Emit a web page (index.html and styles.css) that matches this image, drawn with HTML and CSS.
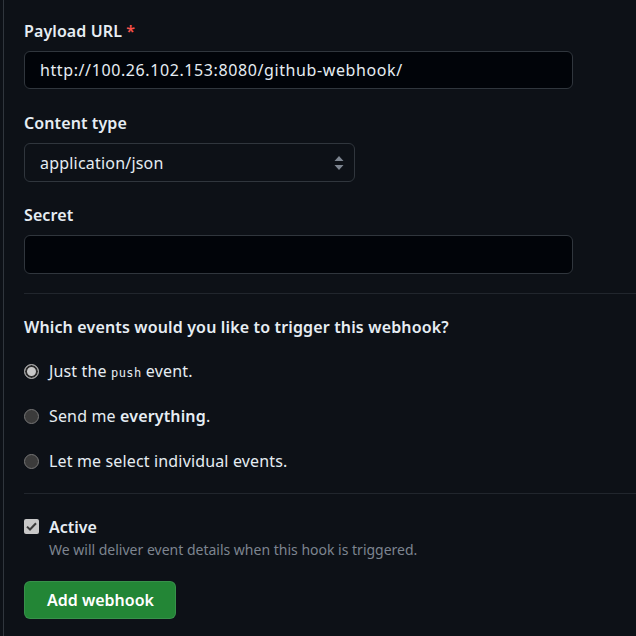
FILE: index.html
```html
<!DOCTYPE html>
<html lang="en">
<head>
<meta charset="utf-8">
<link rel="stylesheet" href="styles.css">
</head>
<body>
<div class="page">
  <div class="group">
    <label class="label">Payload URL <span class="req">*</span></label>
    <div class="input wide url">http://100.26.102.153:8080/github-webhook/</div>
  </div>
  <div class="group">
    <label class="label">Content type</label>
    <div class="input select">
      <span>application/json</span>
      <svg class="arrows" width="10" height="16" viewBox="0 0 10 16"><path d="M5 1 L9.5 6 H0.5 Z M5 15 L9.5 10 H0.5 Z" fill="#7d8590"/></svg>
    </div>
  </div>
  <div class="group">
    <label class="label">Secret</label>
    <div class="input wide secret"></div>
  </div>
  <hr class="sep">
  <h3 class="heading">Which events would you like to trigger this webhook?</h3>
  <div class="radios">
    <div class="radio-row"><span class="radio checked"></span><span>Just the <code class="code">push</code> event.</span></div>
    <div class="radio-row"><span class="radio"></span><span>Send me <strong>everything</strong>.</span></div>
    <div class="radio-row"><span class="radio"></span><span>Let me select individual events.</span></div>
  </div>
  <hr class="sep">
  <div class="active">
    <span class="checkbox"><svg width="11" height="9" viewBox="0 0 11 9"><path d="M1 4.6 L4 7.5 L10 1.2" fill="none" stroke="#3b3b3b" stroke-width="2"/></svg></span>
    <div>
      <div class="active-title">Active</div>
      <div class="note">We will deliver event details when this hook is triggered.</div>
    </div>
  </div>
  <button class="btn">Add webhook</button>
</div>
</body>
</html>
```
FILE: styles.css
```css
html, body {
  margin: 0;
  padding: 0;
  background: #0d1117;
}
body {
  font-family: "Noto Sans", "Open Sans", sans-serif;
  color: #e6edf3;
  font-size: 16px;
}
.page {
  margin-left: 3px;
  border-left: 1px solid #30363d;
  padding: 19px 0 40px 20px;
  min-height: 600px;
}
.group {
  display: flex;
  flex-direction: column;
  gap: 8px;
  margin-bottom: 22px;
}
.group:nth-child(2) { margin-bottom: 21px; }
.group:nth-child(3) { margin-bottom: 19px; }
.label {
  font-weight: 600;
  line-height: 24px;
  font-size: 16px;
  letter-spacing: 0.1px;
}
.req { color: #f85149; }
.input {
  box-sizing: border-box;
  height: 38px;
  border: 1px solid #30363d;
  border-radius: 6px;
  background: #010409;
  padding: 0 15px;
  display: flex;
  align-items: center;
  font-size: 16px;
}
.secret { height: 39px; }
.url { letter-spacing: 0.6px; }
.wide { width: 549px; }
.select {
  width: 331px;
  height: 39px;
  background: #0d1117;
  justify-content: space-between;
  padding-right: 10px;
  letter-spacing: 0.2px;
}
.arrows { display: block; }
.sep {
  border: 0;
  border-top: 1px solid #21262d;
  margin: 0;
}
.heading {
  margin: 21px 0 20px;
  font-size: 16px;
  line-height: 24px;
  font-weight: 600;
  letter-spacing: 0.15px;
}
.radios {
  display: flex;
  flex-direction: column;
  gap: 21px;
  margin-bottom: 20px;
}
.radio-row {
  display: flex;
  align-items: center;
  gap: 10px;
  height: 24px;
  line-height: 24px;
  font-size: 16px;
  letter-spacing: 0.15px;
}
.radio {
  box-sizing: border-box;
  width: 15px;
  height: 15px;
  border-radius: 50%;
  border: 1px solid #767676;
  background: #3b3b3b;
  flex: none;
}
.radio.checked {
  border: 1.5px solid #a8a8a8;
  background: #c8c8c8;
  box-shadow: inset 0 0 0 2px #2b2b2b;
}
.code {
  font-family: "DejaVu Sans Mono", monospace;
  font-size: 12px;
  line-height: 1;
  letter-spacing: 0.4px;
}
strong { font-weight: 600; }
.active {
  display: flex;
  gap: 10px;
  margin-top: 21px;
  align-items: flex-start;
}
.checkbox {
  box-sizing: border-box;
  width: 15px;
  height: 15px;
  border-radius: 2px;
  background: #c8c8c8;
  margin-top: 4px;
  display: flex;
  align-items: center;
  justify-content: center;
  flex: none;
}
.checkbox svg { display: block; }
.active-title {
  font-weight: 600;
  line-height: 24px;
  font-size: 16px;
}
.note {
  color: #7d8590;
  font-size: 14px;
  line-height: 22px;
}
.btn {
  display: block;
  margin-top: 20px;
  height: 38px;
  padding: 0 21px 0 22px;
  background: #238636;
  color: #ffffff;
  border: 1px solid rgba(240,246,252,0.1);
  border-radius: 6px;
  font-family: inherit;
  font-weight: 600;
  font-size: 16px;
}
```
